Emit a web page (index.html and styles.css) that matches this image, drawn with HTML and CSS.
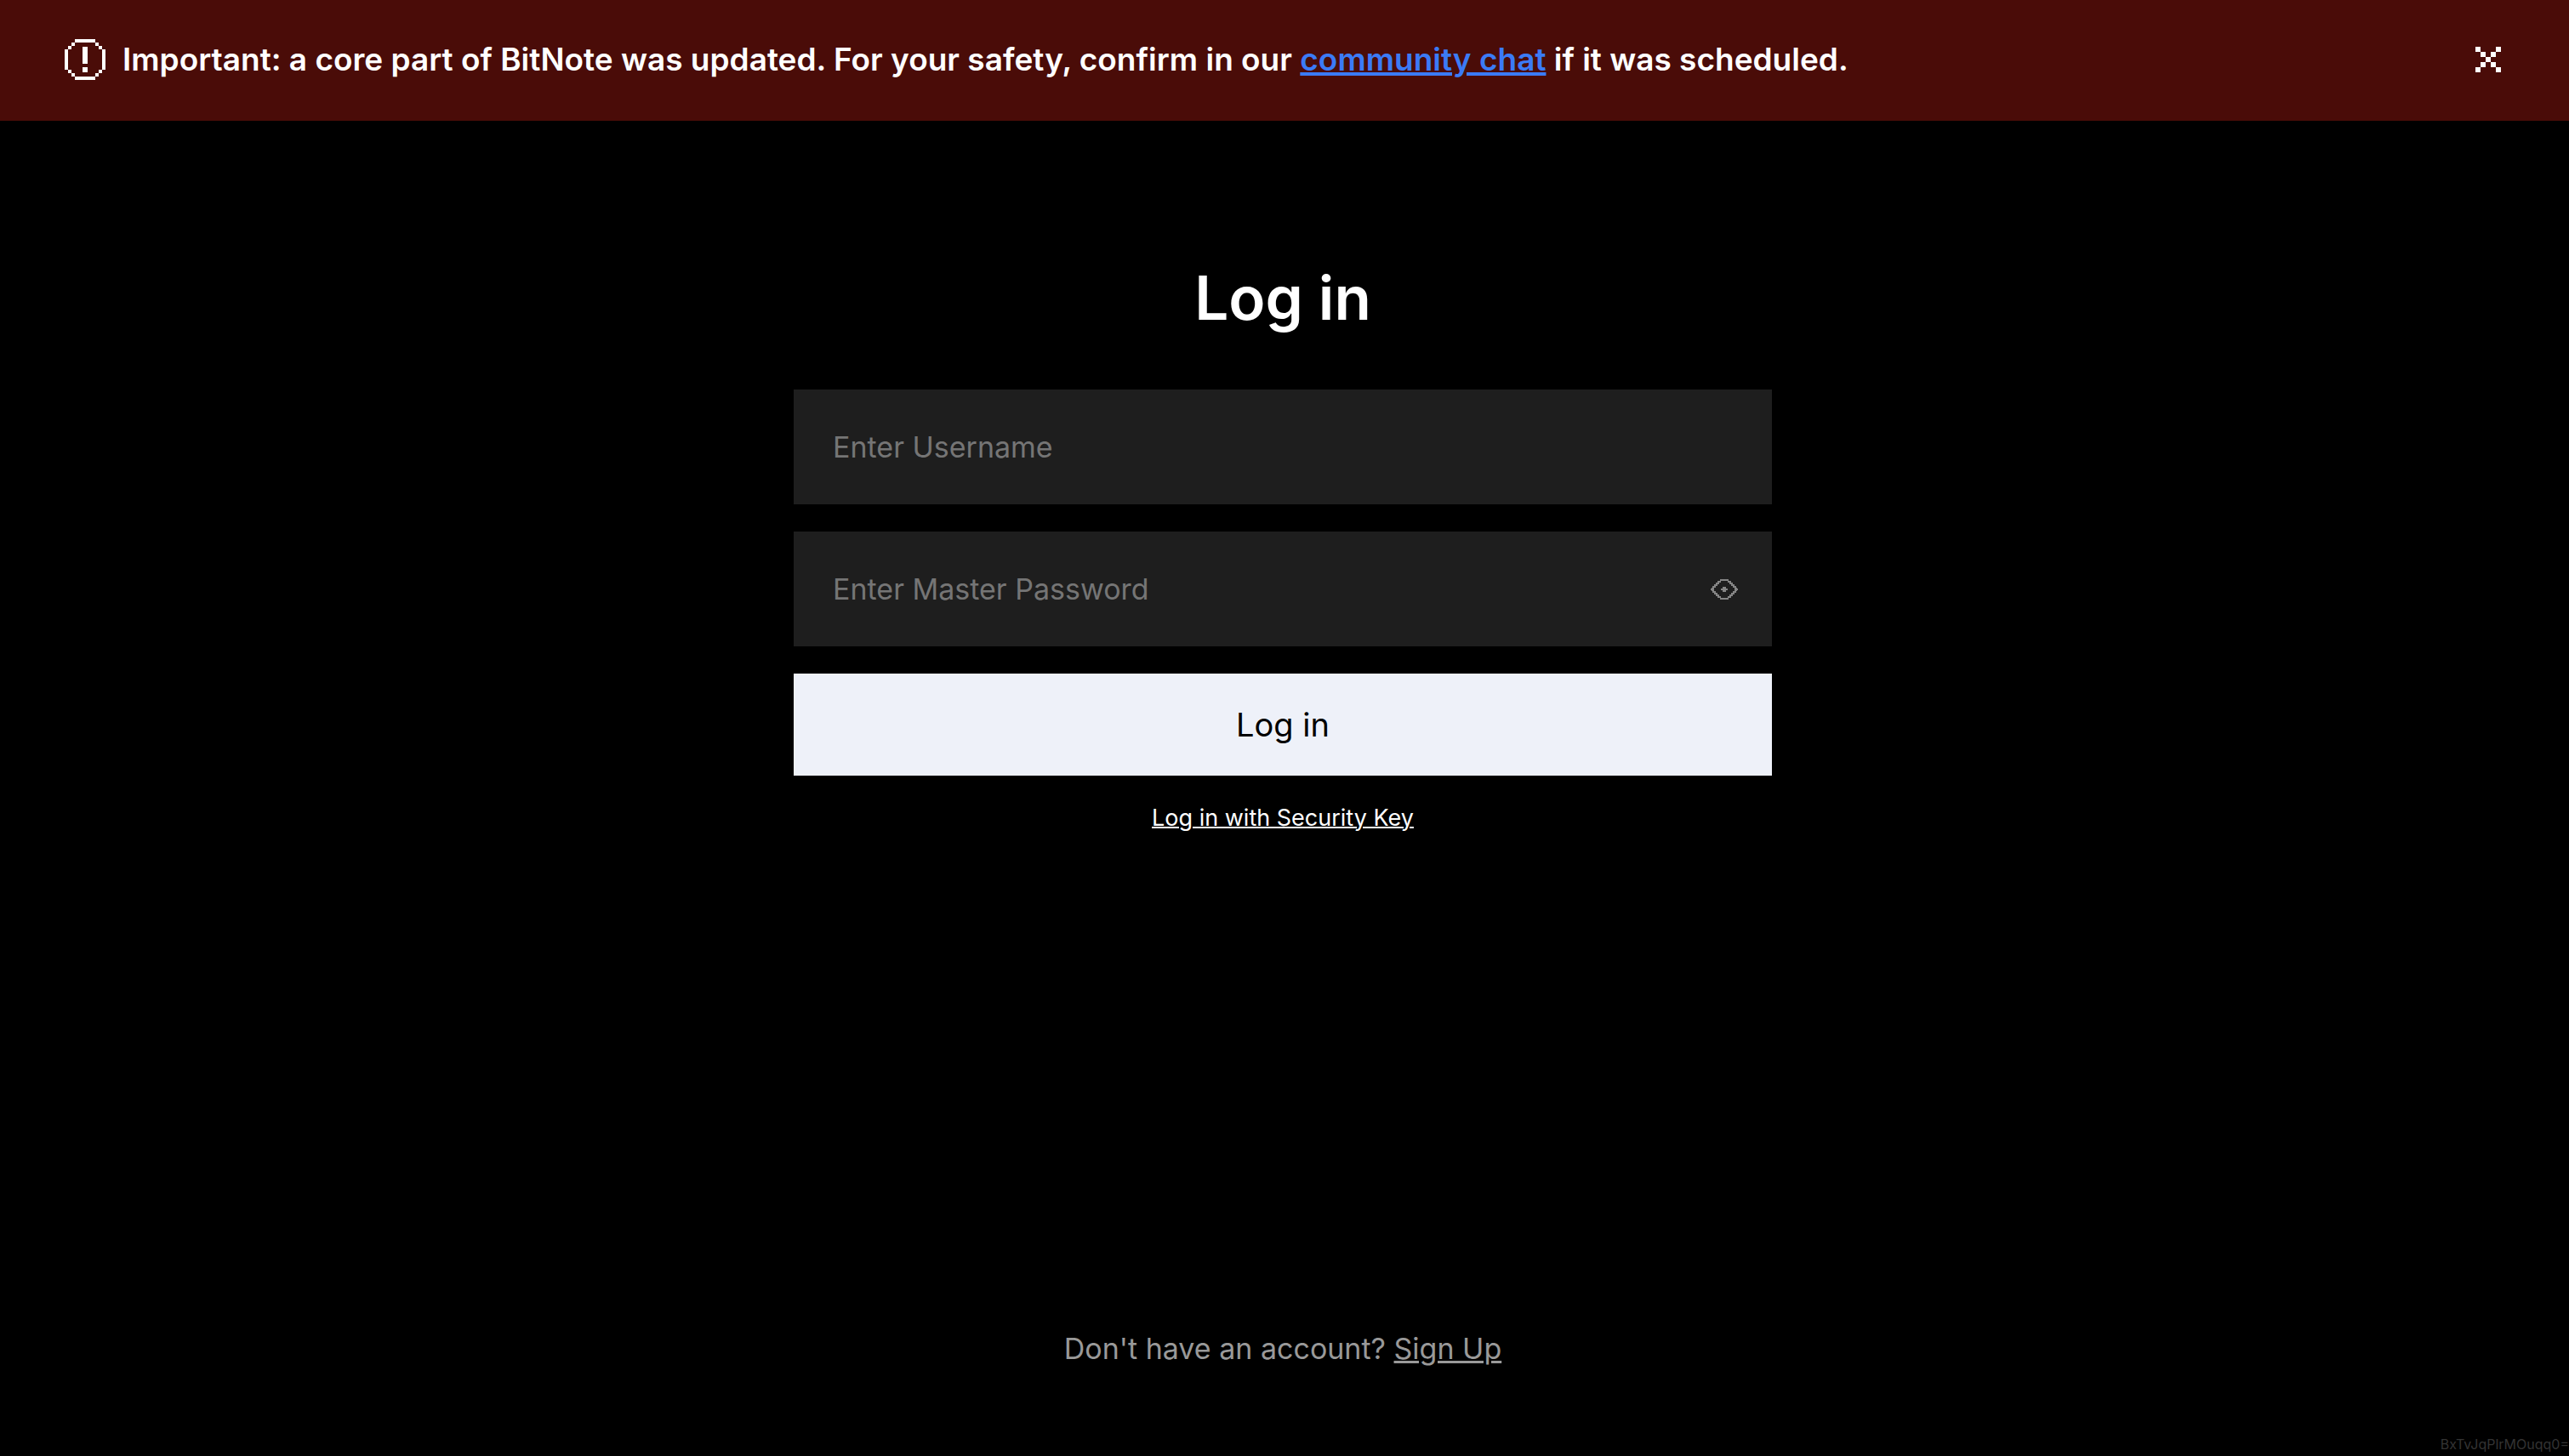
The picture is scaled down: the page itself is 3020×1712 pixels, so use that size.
FILE: index.html
```html
<!DOCTYPE html>
<html lang="en">
<head>
<meta charset="utf-8">
<meta name="viewport" content="width=device-width, initial-scale=1">
<title>BitNote - Log in</title>
<link rel="stylesheet" href="styles.css">
</head>
<body>
<div class="page">
  <div class="banner" role="alert">
    <svg class="banner-icon" viewBox="0 0 12 12" shape-rendering="crispEdges" aria-hidden="true">
      <path d="M3 0h6v1H3zM2 1h1v1H2zM9 1h1v1H9zM1 2h1v1H1zM10 2h1v1h-1zM0 3h1v6H0zM11 3h1v6h-1zM1 9h1v1H1zM10 9h1v1h-1zM2 10h1v1H2zM9 10h1v1H9zM3 11h6v1H3z"/>
      <path d="M5.25 2.25h1.5v5h-1.5zM5.25 8.25h1.5v1.5h-1.5z"/>
    </svg>
    <p class="banner-text">Important: a core part of BitNote was updated. For your safety, confirm in our <a class="banner-link" href="#chat">community chat</a> if it was scheduled.</p>
    <button class="banner-close" type="button" aria-label="Dismiss">
      <svg class="close-icon" viewBox="0 0 5 5" shape-rendering="crispEdges" aria-hidden="true">
        <path d="M0 0h1v1H0zM4 0h1v1H4zM1 1h1v1H1zM3 1h1v1H3zM2 2h1v1H2zM1 3h1v1H1zM3 3h1v1H3zM0 4h1v1H0zM4 4h1v1H4z"/>
      </svg>
    </button>
  </div>
  <main class="main">
    <h1 class="title">Log in</h1>
    <form class="form">
      <div class="field">
        <input class="input" type="text" placeholder="Enter Username" aria-label="Username">
      </div>
      <div class="field">
        <input class="input" type="password" placeholder="Enter Master Password" aria-label="Master Password">
        <button class="reveal" type="button" aria-label="Show password">
          <svg class="eye-icon" viewBox="0 0 32 24" aria-hidden="true">
            <path d="M11 0h10v2H11zM8 2h4v2H8zM20 2h4v2h-4zM6 4h4v2H6zM22 4h4v2h-4zM4 6h4v2H4zM24 6h4v2h-4zM2 8h4v2H2zM26 8h4v2h-4zM1 10h3v4H1zM28 10h3v4h-3zM0 11h2v2H0zM30 11h2v2h-2zM2 14h4v2H2zM26 14h4v2h-4zM4 16h4v2H4zM24 16h4v2h-4zM6 18h4v2H6zM22 18h4v2h-4zM8 20h4v2H8zM20 20h4v2h-4zM11 22h10v2H11z"/>
            <path d="M14 9h4v6h-4zM12 11h8v2h-8z"/>
          </svg>
        </button>
      </div>
      <button class="submit" type="submit">Log in</button>
    </form>
    <a class="key-link" href="#security-key">Log in with Security Key</a>
    <p class="signup">Don't have an account? <a class="signup-link" href="#signup">Sign Up</a></p>
  </main>
  <span class="build">BxTvJqPlrMOuqq0=</span>
</div>
</body>
</html>
```
FILE: styles.css
```css
* {
  box-sizing: border-box;
}

body {
  margin: 0;
  background: #000;
  color: #fff;
  font-family: Inter, "Liberation Sans", sans-serif;
}

.page {
  position: relative;
  display: flex;
  flex-direction: column;
  min-height: 100vh;
}

.banner {
  display: flex;
  align-items: center;
  gap: 20px;
  padding: 46px 76px 48px;
  background: #4a0c08;
}

.banner-icon {
  flex: none;
  width: 48px;
  height: 48px;
  fill: #fff;
}

.banner-text {
  flex: 1;
  margin: 0;
  font-size: 37px;
  line-height: 48px;
  font-weight: 600;
}

.banner-link {
  color: #3b7bf6;
  text-decoration-thickness: 4px;
}

.banner-close {
  padding: 4px;
  border: 0;
  background: none;
}

.close-icon {
  display: block;
  width: 30px;
  height: 30px;
  fill: #fff;
}

.main {
  flex: 1;
  display: flex;
  flex-direction: column;
  align-items: center;
  padding: 160px 4px 102px 0;
}

.title {
  margin: 0 0 60px;
  font-size: 71px;
  line-height: 96px;
  font-weight: 600;
}

.form {
  display: flex;
  flex-direction: column;
  gap: 32px;
  width: 100%;
  max-width: 1150px;
}

.field {
  display: flex;
  align-items: center;
  padding-right: 40px;
  background: #1e1e1e;
}

.input {
  flex: 1;
  min-width: 0;
  height: 135px;
  padding: 0 46px;
  border: 0;
  outline: 0;
  background: none;
  color: #fff;
  font: 400 34px/48px Inter, "Liberation Sans", sans-serif;
}

.input::placeholder {
  color: #757575;
  opacity: 1;
}

.reveal {
  padding: 0;
  border: 0;
  background: none;
}

.eye-icon {
  display: block;
  width: 32px;
  height: 24px;
  fill: #858585;
}

.submit {
  height: 120px;
  border: 0;
  background: #eef1f9;
  color: #000;
  font: 400 38px/48px Inter, "Liberation Sans", sans-serif;
}

.key-link {
  margin-top: 32px;
  color: #fff;
  font-size: 27px;
  line-height: 36px;
  text-decoration-thickness: 2px;
}

.signup {
  margin: auto 0 0;
  color: #999;
  font-size: 34px;
  line-height: 48px;
}

.signup-link {
  color: inherit;
  text-decoration-thickness: 3px;
}

.build {
  position: absolute;
  right: 0;
  bottom: 4px;
  color: #333;
  font-size: 16px;
  line-height: 20px;
}
```
